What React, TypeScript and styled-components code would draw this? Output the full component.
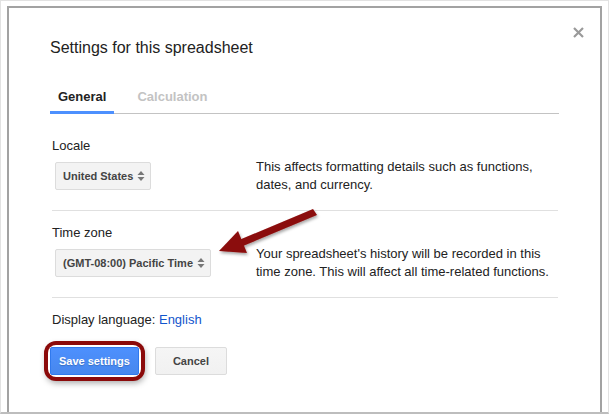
import styled, { createGlobalStyle } from 'styled-components';

const GlobalStyle = createGlobalStyle`
  html, body {
    margin: 0;
    padding: 0;
    background: #ffffff;
  }
  body {
    font-family: Arial, "Liberation Sans", sans-serif;
    color: #222;
  }
`;

const Frame = styled.div`
  position: relative;
  width: 609px;
  height: 414px;
  box-sizing: border-box;
  border: 1px solid #e2e2e2;
  border-bottom: 2px solid #bdbdbd;
  padding: 5px 6px 0 6px;
  overflow: hidden;
`;

const Dialog = styled.div`
  position: relative;
  height: 100%;
  box-sizing: border-box;
  border: 2px solid #a2a2a2;
  border-bottom: none;
  padding: 30px 41px 0 41px;
`;

const Close = styled.button`
  position: absolute;
  top: 17px;
  right: 15px;
  width: 14px;
  height: 14px;
  padding: 0;
  border: none;
  background: none;
  cursor: pointer;
  display: flex;
  align-items: center;
  justify-content: center;
`;

const Title = styled.h1`
  margin: 0;
  font-size: 16px;
  font-weight: normal;
  line-height: 20px;
  color: #222;
`;

const TabBar = styled.div`
  display: flex;
  margin-top: 29px;
  border-bottom: 1px solid #c3c3c3;
`;

const Tab = styled.div<{ $active?: boolean }>`
  padding: 0 8px 4px;
  margin-right: 15px;
  margin-bottom: -1px;
  font-size: 13px;
  font-weight: bold;
  line-height: 20px;
  color: ${(p) => (p.$active ? '#222' : '#c3c3c3')};
  border-bottom: 3px solid ${(p) => (p.$active ? '#4d90fe' : 'transparent')};
`;

const Section = styled.section<{ $first?: boolean }>`
  margin: 0 1px 0 2px;
  padding: ${(p) => (p.$first ? '24px' : '14px')} 0 16px;
  border-bottom: 1px solid #e0e0e0;
`;

const Label = styled.div`
  font-size: 13px;
  line-height: 16px;
  margin-bottom: 4px;
`;

const Row = styled.div`
  display: grid;
  grid-template-columns: 204px 1fr;
  align-items: center;
`;

const Select = styled.div`
  justify-self: start;
  display: flex;
  align-items: center;
  gap: 4px;
  height: 28px;
  box-sizing: border-box;
  margin-left: 3px;
  padding: 0 5px 0 7px;
  background: #f3f3f3;
  border: 1px solid #dcdcdc;
  border-radius: 2px;
  font-size: 11px;
  font-weight: bold;
  color: #444;
`;

const Desc = styled.p`
  margin: 0;
  font-size: 13px;
  line-height: 18px;
  color: #222;
`;

const LangRow = styled.div`
  margin: 14px 0 0 2px;
  font-size: 13px;
  line-height: 16px;
`;

const Link = styled.a`
  color: #1155cc;
  text-decoration: none;
`;

const Buttons = styled.div`
  display: flex;
  gap: 16px;
  margin-top: 19px;
`;

const Button = styled.button<{ $primary?: boolean }>`
  height: 28px;
  padding: 0 ${(p) => (p.$primary ? '8px' : '17px')};
  font-family: Arial, "Liberation Sans", sans-serif;
  font-size: 11px;
  font-weight: bold;
  border-radius: 2px;
  cursor: pointer;
  color: ${(p) => (p.$primary ? '#fff' : '#444')};
  background: ${(p) =>
    p.$primary ? 'linear-gradient(#4d90fe, #4787ed)' : 'linear-gradient(#f5f5f5, #f1f1f1)'};
  border: 1px solid ${(p) => (p.$primary ? '#3079ed' : '#dcdcdc')};
  text-shadow: ${(p) => (p.$primary ? '0 1px 1px rgba(0,0,0,0.2)' : 'none')};
`;

const Highlight = styled.span`
  display: inline-flex;
  border-radius: 6px;
  box-shadow: 0 0 0 2px #ffffff, 0 0 0 6px #8b0a0a, 1px 3px 6px 5px rgba(0, 0, 0, 0.35);
`;

const Pointer = styled.svg`
  position: absolute;
  left: 208px;
  top: 207px;
  overflow: visible;
`;

const Stepper = () => (
  <svg width="8" height="12" viewBox="0 0 8 12">
    <path d="M4 1 L7.5 5 L0.5 5 Z" fill="#777" />
    <path d="M4 11 L7.5 7 L0.5 7 Z" fill="#777" />
  </svg>
);

export default function App() {
  return (
    <>
      <GlobalStyle />
      <Frame>
        <Dialog>
          <Close aria-label="Close">
            <svg width="11" height="11" viewBox="0 0 11 11">
              <path d="M1 1 L10 10 M10 1 L1 10" stroke="#9a9a9a" strokeWidth="2.2" />
            </svg>
          </Close>
          <Title>Settings for this spreadsheet</Title>
          <TabBar>
            <Tab $active>General</Tab>
            <Tab>Calculation</Tab>
          </TabBar>

          <Section $first>
            <Label>Locale</Label>
            <Row>
              <Select>
                United States <Stepper />
              </Select>
              <Desc>
                This affects formatting details such as functions,
                <br />
                dates, and currency.
              </Desc>
            </Row>
          </Section>

          <Section>
            <Label>Time zone</Label>
            <Row>
              <Select>
                (GMT-08:00) Pacific Time <Stepper />
              </Select>
              <Desc>
                Your spreadsheet's history will be recorded in this
                <br />
                time zone. This will affect all time-related functions.
              </Desc>
            </Row>
          </Section>

          <LangRow>
            Display language: <Link href="#">English</Link>
          </LangRow>

          <Buttons>
            <Highlight>
              <Button $primary>Save settings</Button>
            </Highlight>
            <Button>Cancel</Button>
          </Buttons>
        </Dialog>

        <Pointer width="110" height="50" viewBox="0 0 110 50">
          <defs>
            <filter id="sh" x="-20%" y="-40%" width="140%" height="180%">
              <feDropShadow dx="1" dy="2" stdDeviation="1.5" floodColor="#000" floodOpacity="0.35" />
            </filter>
          </defs>
          <g filter="url(#sh)" fill="#8b0a0a">
            <path d="M108 7 L104 1 L30 32 L34 38 Z" />
            <path d="M10 43 L29 23 L38 45 Z" />
          </g>
        </Pointer>
      </Frame>
    </>
  );
}
